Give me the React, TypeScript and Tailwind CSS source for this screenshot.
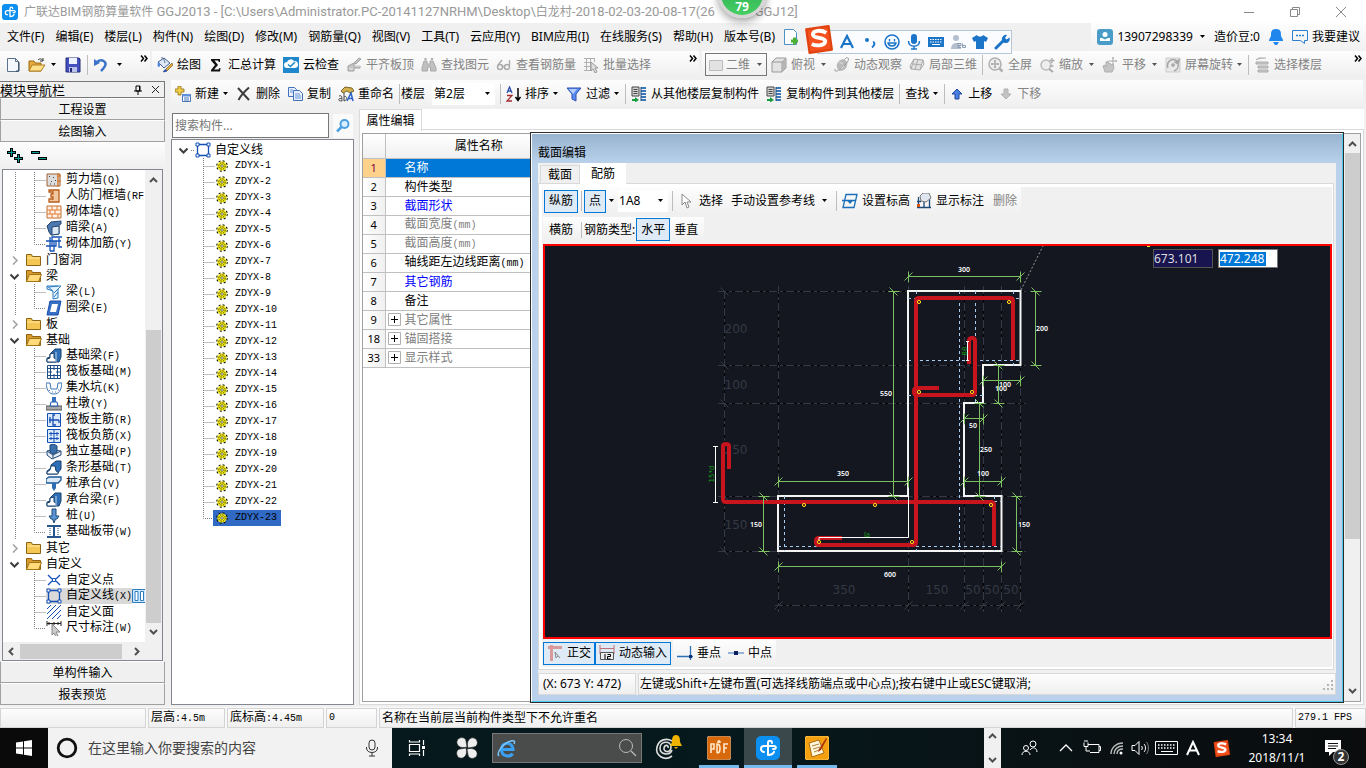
import React from 'react';

type Kids = { children?: React.ReactNode };

const Svg = ({ children, w = 16, h = 16, box }: Kids & { w?: number; h?: number; box?: string }) => (
  <svg width={w} height={h} viewBox={box ?? `0 0 ${w} ${h}`} fill="none" className="shrink-0" aria-hidden="true">
    {children}
  </svg>
);

const Caret = ({ color = '#000' }: { color?: string }) => (
  <Svg w={7} h={4}><path d="M1 0h5L3.5 3z" fill={color} /></Svg>
);

// Latin runs are drawn half as wide as the Chinese ones
const Mono = ({ text }: { text: string }) => (
  <>
    {text.split(/([\x20-\x7e]+)/).filter(Boolean).map((part, i) =>
      /^[\x20-\x7e]/.test(part)
        ? <span key={i} className="font-['Liberation_Mono','Noto_Sans_CJK_SC',monospace] text-[10px] whitespace-pre">{part}</span>
        : part
    )}
  </>
);

const Sep = () => <span className="-mx-0.5 h-5 w-px shrink-0 bg-[#bdbdbd]" />;

const More = () => (
  <Svg w={8} h={7}><path d="M1 .5l2.500 3L1 6.500M4.500 .5l2.500 3-2.500 3" stroke="#000" strokeWidth="1.500" /></Svg>
);

/* ---------- toolbar icons ---------- */

const NewFile = () => <Svg w={14}><path d="M1.500 1.500h8l3 3v10h-11z" fill="#f4f8fd" stroke="#5d7189" /><path d="M9.500 1.500v3h3" stroke="#5d7189" /><path d="M10 14h3V5" stroke="#2c4664" /></Svg>;

const OpenFile = () => (
  <Svg w={18}>
    <path d="M1 14V4h5l1 2h6v8z" fill="#e6a93a" stroke="#9b6a14" />
    <path d="M1 14l3-6h13l-4 6z" fill="#ffe08a" stroke="#b07d20" />
    <path d="M10 3c2-2 4-1 5 1M15 1v3h-3" stroke="#333" />
  </Svg>
);

const Save = () => (
  <Svg>
    <path d="M1 1h13l1 1v13H1z" fill="#4550c0" stroke="#222a78" />
    <path d="M4 1h8v6H4z" fill="#eef1ff" /><path d="M4 10h8v5H4z" fill="#b9c1e8" /><path d="M5 11h2v4H5z" fill="#222a78" />
  </Svg>
);

const Undo = () => <Svg w={14}><path d="M3 5c5-4 10 0 8 4-1 2-2 3-4 5" stroke="#3b74c8" strokeWidth="2.500" /><path d="M0 2v7l6-3z" fill="#3b74c8" /></Svg>;

const Bucket = () => (
  <Svg>
    <path d="M1 5l6-4 6 5-6 5z" fill="#dfe9f5" stroke="#44608c" /><path d="M4 1c1-1 3 0 4 5" stroke="#44608c" />
    <path d="M1 5c-1 4 0 5 1 5s1-2 1-4z" fill="#4c86d8" /><path d="M15 6l-7 7-2 2 4-1 6-6z" fill="#e5b13a" stroke="#5b4310" strokeWidth=".6" />
    <path d="M6 15c2-4 4-3 4-1-1 1-2 1-4 1z" fill="#2c56b8" />
  </Svg>
);

const Sigma = () => <Svg><path d="M3 2h9v3h-1l-1-1.500H6.500L10 8l-4 4.500h4.500L11.500 11h1l-.5 3.500H3V13l4-5-4-4.500z" fill="#111" /></Svg>;

const CloudCheck = () => (
  <Svg>
    <path d="M0 0h16v16H0z" fill="#1f87cc" /><path d="M4 11a3 3 0 0 1 0-6 4 4 0 0 1 7-1 3.500 3.500 0 0 1 1 7z" fill="#fff" />
    <path d="M5 7.500l2.500 2L12 5" stroke="#1f87cc" strokeWidth="1.500" />
  </Svg>
);

const SlabTop = () => <Svg><path d="M2 9l6-3v3h6v2H8v3H2zM8 6l5-5 2 1-5 5z" fill="#c4c4c4" stroke="#a2a2a2" /><path d="M3 12h4M9 9h5" stroke="#eee" /></Svg>;
const Binocular = () => <Svg><path d="M3 4h3v3h3V4h3l3 7v3H9.500v-4h-3v4H1v-3z" fill="#c0c0c0" stroke="#a8a8a8" /><path d="M3.500 2h2M10 2h2" stroke="#aaa" strokeWidth="2" /></Svg>;
const Glasses = () => <Svg><circle cx="4" cy="10" r="2.500" stroke="#aaa" strokeWidth="1.500" /><circle cx="11" cy="10" r="2.500" stroke="#aaa" strokeWidth="1.500" /><path d="M2 8l4-5M13.500 9V3M6.500 9.500h2" stroke="#aaa" strokeWidth="1.300" /></Svg>;
const BatchSelect = () => <Svg><path d="M1 1.500h11M1 5.500h8M1 9.500h7M1 13.500h7M3.500 1v13M7.500 1v13M11.500 1v4" stroke="#b0b0b0" /><path d="M8 5l7 6h-3l2 4-2 1-2-4-2 2z" fill="#ddd" stroke="#999" /></Svg>;
const Cube = () => <Svg><path d="M1 5l4-4h10v10l-4 4H1z" fill="#e3e3e3" stroke="#999" /><path d="M1 5h10v10M11 5l4-4" stroke="#999" /><path d="M11 5l4-4v10l-4 4z" fill="#b5b5b5" /></Svg>;
const Planet = () => <Svg><ellipse cx="8" cy="8" rx="5" ry="6" fill="#b9b9b9" transform="rotate(30 8 8)" /><path d="M1 12c-1 4 4 2 8-2s7-8 5-9-4 2-4 2" stroke="#999" /><path d="M5 5l4 2M7 12l3-3" stroke="#ddd" /></Svg>;
const Cube3d = () => <Svg><path d="M5 2l9 1-3 10-9-1z" fill="#e2e2e2" stroke="#aaa" /><path d="M9 2.500L6 12.500M4 7l9 1M2 12L1 9l4-7M14 3l1 4-4 6" stroke="#aaa" /></Svg>;
const FullView = () => <Svg><circle cx="7" cy="7" r="6" fill="#eee" stroke="#b0b0b0" strokeWidth="1.500" /><path d="M11.500 11.500l3 3" stroke="#b0b0b0" strokeWidth="2.500" /><path d="M7 3v8M3 7h8M6 4h2M6 10h2M4 6v2M10 6v2" stroke="#999" /></Svg>;
const ZoomIcon = () => <Svg><circle cx="7" cy="8" r="5" fill="#eee" stroke="#bbb" strokeWidth="1.500" /><path d="M10 12l4 3" stroke="#aaa" strokeWidth="2" /><path d="M13 1v5M10.500 3.500h5M10.500 9h4" stroke="#aaa" strokeWidth="1.300" /></Svg>;
const Pan = () => <Svg><path d="M3 15l-2-6 2-1 1 2V5l2-1 1 3 1-1 1 2 2-1 1 4-2 4z" fill="#c4c4c4" stroke="#b0b0b0" /><path d="M11 0v8M7 4h8M10 1h2M14 3v2" stroke="#aaa" /></Svg>;
const Rotate = () => <Svg><path d="M1 1h14v14H1z" fill="#e8e8e8" stroke="#ccc" /><path d="M3 11a6 6 0 0 1 3-8c3-1 6 0 7 3M13 6c1 4-1 7-4 8M6 8h4M8 6v4M14 3l-1 4-3-2z" stroke="#a6a6a6" strokeWidth="1.500" /></Svg>;
const Floors = () => <Svg><path d="M2 5h12v2H2zM4 9h10v2H4zM4 13h10v2H4zM2 3l3-2h7" fill="#ccc" stroke="#aaa" /></Svg>;
const FlatView = () => <Svg><path d="M1.500 3.500h13v10h-13z" fill="#e2e2e2" stroke="#bdbdbd" /></Svg>;

const AddNew = () => (
  <Svg>
    <path d="M3 0h3v3h3v3H6v3H3V6H0V3h3z" fill="#f6cf4a" stroke="#8d7012" strokeWidth=".8" />
    <path d="M7.500 8.500h8v7h-8z" fill="#fff" stroke="#4773b8" /><path d="M7 8h9v2.500H7z" fill="#5e8fd8" /><path d="M9 12h5M9 14h5" stroke="#4773b8" />
  </Svg>
);
const Cross = () => <Svg><path d="M2 2l11 12M13 1.500C9 5 5 9 2.500 14" stroke="#3c3c3c" strokeWidth="2" /></Svg>;
const Copy = () => <Svg><path d="M1.500 1.500h6l2 2v7h-8z" fill="#e7f0fc" stroke="#4370ba" /><path d="M6.500 4.500h6l3 3v7h-9z" fill="#e7f0fc" stroke="#4370ba" /><path d="M3 4h3M3 6h3M8 8h5M8 10h6M8 12h6" stroke="#6b97d8" /></Svg>;
const Rename = () => (
  <Svg>
    <path d="M3 5l4-4 7 1 2 3-4 2-3-2-4 2z" fill="#d4b04c" stroke="#5e4b12" strokeWidth=".8" />
    <path d="M1 10c3-1 3 1 3 5-3 0-4-1-3-2s3-.5 3-.5M6 7v8M6 11c3-2 4 3 0 4" stroke="#444" /><path d="M9 15l4-8 2 8M10 12.500h5" stroke="#2c62c8" strokeWidth="1.500" />
  </Svg>
);
const SortAz = () => <Svg w={15}><path d="M1 7l2.500-6L6 7M2 5h3" stroke="#2d4fa8" strokeWidth="1.300" /><path d="M1 9.500h5L1 15h5" stroke="#a32c30" strokeWidth="1.300" /><path d="M12 2v12M9.500 11l2.500 3.500 2.500-3.500" stroke="#000" strokeWidth="1.500" /></Svg>;
const Funnel = () => <Svg><path d="M1 2h14l-5 6v7l-4-2V8z" fill="#5b8df0" stroke="#2a50ae" /><path d="M3 3h8L7 8z" fill="#b6cdfb" /></Svg>;
const FloorCopy = () => (
  <Svg>
    <path d="M1 1h7v9H1z" fill="#d5d5d5" stroke="#444" /><path d="M2.500 3.500h4M2.500 5.500h4M2.500 7.500h4" stroke="#444" />
    <path d="M10 2h5M10 5h5M10 8h5M10 11h5M10 14h5" stroke="#3b78b8" strokeWidth="2" /><path d="M10 1v14" stroke="#24507c" />
    <path d="M1 13h3v-2l4 3-4 2.500V15H1z" fill="#189c40" />
  </Svg>
);
const ArrowUp = () => <Svg w={14} h={12}><path d="M7 1l5 5H9v5H5V6H2z" fill="#4a7ee0" stroke="#1f489e" /></Svg>;
const ArrowDown = () => <Svg w={14} h={12}><path d="M7 11l5-5H9V1H5v5H2z" fill="#c4c4c4" stroke="#b0b0b0" /></Svg>;
const Search = () => <Svg><circle cx="9.500" cy="6" r="4" fill="#d9efff" stroke="#4a9fe0" strokeWidth="2" /><path d="M6.500 9L2 13.500" stroke="#4a9fe0" strokeWidth="2.500" /></Svg>;

const AppLogo = ({ size = 16 }: { size?: number }) => (
  <Svg w={size} h={size} box="0 0 24 24">
    <rect width="24" height="24" rx="5" fill="#0b8ff0" />
    <path d="M16 7c0-3-4-3-4 0v12M5 13c0-2 1-3 3-3h10c3 0 2 4-1 3M5 13c0 2 2 3 3 3M12 19c3 0 5-1 6-3" stroke="#fff" strokeWidth="2" strokeLinecap="round" />
  </Svg>
);

const SogouLogo = ({ size }: { size: number }) => (
  <Svg w={size} h={size} box="0 0 26 26">
    <path d="M2 4l20-3 3 21-20 3z" fill="#f4511e" stroke="#e0430f" strokeLinejoin="round" strokeWidth="2" />
    <path d="M20 7c-5-3-12-2-12 1.500 0 4 11 2 11 6 0 3.500-7 5-12 2.500" stroke="#fff" strokeWidth="3.500" />
  </Svg>
);

/* ---------- header ---------- */

const menus = ['文件(F)', '编辑(E)', '楼层(L)', '构件(N)', '绘图(D)', '修改(M)', '钢筋量(Q)', '视图(V)', '工具(T)', '云应用(Y)', 'BIM应用(I)', '在线服务(S)', '帮助(H)', '版本号(B)'];

const TitleBar = () => (
  <header className="relative flex h-[23px] shrink-0 items-center bg-white pl-0.5">
    <AppLogo />
    <h1 className="ml-1.5 font-['Roboto','Noto_Sans_CJK_SC',sans-serif] text-[13px] whitespace-pre text-[#999]">
      <span className="text-[12px]">广联达BIM钢筋算量软件</span> GGJ2013 - [C:\Users\Administrator.PC-20141127NRHM\Desktop\<span className="text-[12px]">白龙村</span>-2018-02-03-20-08-17(26<span className="ml-10">GGJ12]</span>
    </h1>
    <div className="absolute -top-[30px] left-[718px] z-20 flex size-12 items-end justify-center rounded-full border-3 border-[#d5d5d5] bg-linear-to-b from-[#28a050] to-[#45cf62] text-[12px] font-bold text-white shadow-[0_3px_8px_#0006]">79</div>
    <div className="ml-auto flex items-center gap-[34px] pr-[19px] text-[#888]">
      <button aria-label="最小化"><Svg w={12} h={12}><path d="M1 6.500h10" stroke="#888" /></Svg></button>
      <button aria-label="还原"><Svg w={12} h={12}><path d="M1.500 3.500h7v7h-7zM3.500 3.500v-2h7v7h-2" stroke="#888" /></Svg></button>
      <button aria-label="关闭"><Svg w={12} h={12}><path d="M1 1l10 10M11 1L1 11" stroke="#888" /></Svg></button>
    </div>
  </header>
);

const SogouBar = () => (
  <div className="absolute top-[7px] left-[817px] z-10 flex h-6 w-[195px] items-center gap-[6px] border border-[#b4c6d8] bg-[#fafcff] pl-5">
    <div className="absolute -top-1.5 -left-3.5"><SogouLogo size={29} /></div>
    <Svg w={18}><path d="M3 14L9 2l6 12M5.500 10h7" stroke="#1a74c8" strokeWidth="2.200" /></Svg>
    <Svg><circle cx="5" cy="6" r="2" fill="#1a74c8" /><path d="M11 8.500c2-1 2 3-1 5" stroke="#1a74c8" strokeWidth="2" /></Svg>
    <Svg><circle cx="8" cy="8" r="7" stroke="#1a74c8" strokeWidth="1.600" /><path d="M5.500 5v2.500M10.500 5v2.500M4 9c1 4 7 4 8 0z" stroke="#1a74c8" strokeWidth="1.400" /></Svg>
    <Svg><rect x="5" y="0" width="6" height="10" rx="3" fill="#1a74c8" /><path d="M2.500 7c0 7 11 7 11 0M8 12v3M5 15h6" stroke="#1a74c8" strokeWidth="1.500" /></Svg>
    <Svg><path d="M0 3h16v10H0z" fill="#1a74c8" /><path d="M2 5.500h12M2 8h12" stroke="#fff" strokeDasharray="1.500 1" /><path d="M4 10.500h8" stroke="#fff" /></Svg>
    <Svg><circle cx="6" cy="4" r="3" fill="#b3bfd0" /><path d="M1 15c0-8 10-8 10 0z" fill="#b3bfd0" /><path d="M7 9.500h4v2H8v2h3M12.500 9.500v4h3v-2h-3" stroke="#8b9ab0" /></Svg>
    <Svg><path d="M5 1c1 2 5 2 6 0l5 3-2 4-2-1v8H4V7L2 8 0 4z" fill="#1a74c8" /></Svg>
    <Svg><path d="M2 14l7-7" stroke="#1a74c8" strokeWidth="3" strokeLinecap="round" /><path d="M13 1l-2 3 1.500 1.500 3-2c1 3-1 6-4 5.500C8 9 7 5 8.500 3S11 .5 13 1z" fill="#1a74c8" /></Svg>
  </div>
);

const MenuBar = () => (
  <nav className="relative flex h-7 shrink-0 items-center bg-[#f0f0f0] pl-[7px]">
    <div className="flex gap-[11px]">
      {menus.map(m => <button key={m}>{m}</button>)}
    </div>
    <div className="ml-2"><Svg><path d="M1.500 .5h9l3 3v12h-12z" fill="#fff" stroke="#4b92c8" /><path d="M8 12h7M11.500 8.500v7" stroke="#4cb030" strokeWidth="3" /></Svg></div>
    <SogouBar />
    <div className="ml-auto flex h-full items-center bg-linear-to-b from-[#fdfdfd] to-[#f0f0f0] pr-1.5 pl-1.5">
      <Svg><rect width="16" height="16" rx="3" fill="#4a9cc8" /><circle cx="8" cy="5.500" r="2.500" fill="#fff" /><path d="M3 12V9h2l3 1.500L11 9h2v3z" fill="#fff" /></Svg>
      <button className="ml-1 flex items-center gap-1.5">13907298339 <Caret /></button>
      <span className="ml-2">造价豆:0</span>
      <span className="ml-2"><Svg><path d="M8 0c5 0 5 3 5 7l2 4v1H1v-1l2-4c0-4 0-7 5-7z" fill="#1f86ee" /><path d="M5 13h6l-2 3H7z" fill="#1f86ee" /></Svg></span>
      <button className="ml-2 flex items-center gap-1"><Svg><path d="M.5 1.500h15v10h-3v3l-4-3h-8z" stroke="#2a7fd0" /><path d="M4 6.500h8" stroke="#2a7fd0" strokeWidth="1.500" strokeDasharray="2 1" /></Svg>我要建议</button>
    </div>
  </nav>
);

interface ToolProps {
  icon?: React.ReactNode;
  label: string;
  caret?: boolean;
  off?: boolean;
  tight?: boolean;
}

const Tool = ({ icon, label, caret, off, tight }: ToolProps) => (
  <button className={`flex shrink-0 items-center gap-1 whitespace-nowrap ${off ? 'text-[#838383]' : 'text-black'}`}>
    {icon}
    {label}
    {caret && <span className={tight ? '-ml-px' : 'ml-px'}><Caret color={off ? '#555' : '#000'} /></span>}
  </button>
);

const bar = 'flex items-center bg-linear-to-b from-[#fdfdfd] to-[#efefef]';

const MainToolbar = () => (
  <div className="flex h-[29px] shrink-0 bg-[#f0f0f0] pb-0.5">
    <div className={`${bar} w-[150px] gap-2 pl-1.5`}>
      <button aria-label="新建"><NewFile /></button>
      <button aria-label="打开" className="flex items-center gap-1"><OpenFile /><Caret /></button>
      <button aria-label="保存"><Save /></button>
      <Sep />
      <button aria-label="撤销" className="flex items-center gap-2"><Undo /><Caret /></button>
      <span className="mb-3 ml-auto pr-0.5"><More /></span>
    </div>
    <div className={`${bar} ml-0.5 w-[547px] gap-[7px] pl-[5px]`}>
      <Tool icon={<Bucket />} label="绘图" />
      <Tool icon={<Sigma />} label="汇总计算" />
      <Tool icon={<CloudCheck />} label="云检查" />
      <Tool icon={<SlabTop />} label="平齐板顶" off />
      <Tool icon={<Binocular />} label="查找图元" off />
      <Tool icon={<Glasses />} label="查看钢筋量" off />
      <Tool icon={<BatchSelect />} label="批量选择" off />
      <span className="mb-3 ml-auto pr-0.5"><More /></span>
    </div>
    <div className={`${bar} ml-[3px] grow gap-[7px] pl-[3px]`}>
      <label className="-mr-[3px] flex h-[23px] w-[62px] items-center border border-[#777] pr-[3px] pl-0.5 text-[#838383]">
        <FlatView />
        <select aria-label="视图模式" className="ml-0.5 w-7 appearance-none outline-none"><option>二维</option></select>
        <span className="ml-auto"><Caret color="#555" /></span>
      </label>
      <Tool icon={<Cube />} label="俯视" caret off />
      <Tool icon={<Planet />} label="动态观察" off />
      <Tool icon={<Cube3d />} label="局部三维" off />
      <Sep />
      <Tool icon={<FullView />} label="全屏" off />
      <Tool icon={<ZoomIcon />} label="缩放" caret off />
      <Tool icon={<Pan />} label="平移" caret off />
      <Tool icon={<Rotate />} label="屏幕旋转" caret tight off />
      <Sep />
      <Tool icon={<Floors />} label="选择楼层" off />
      <span className="mb-3 ml-auto pr-1"><More /></span>
    </div>
  </div>
);

const ComponentToolbar = () => (
  <div className={`${bar} mr-[3px] h-7 shrink-0 gap-[7px] pl-1`}>
    <Tool icon={<AddNew />} label="新建" caret tight />
    <Tool icon={<Cross />} label="删除" />
    <Tool icon={<Copy />} label="复制" />
    <Tool icon={<Rename />} label="重命名" />
    <Sep />
    <label htmlFor="floor" className="-ml-1">楼层</label>
    <span className="flex h-[22px] w-[63px] items-center bg-white pr-1 pl-0.5">
      <select id="floor" className="grow appearance-none outline-none"><option>第2层</option></select>
      <Caret />
    </span>
    <Sep />
    <Tool icon={<SortAz />} label="排序" caret tight />
    <Tool icon={<Funnel />} label="过滤" caret tight />
    <Sep />
    <Tool icon={<FloorCopy />} label="从其他楼层复制构件" />
    <Tool icon={<FloorCopy />} label="复制构件到其他楼层" />
    <Sep />
    <Tool label="查找" caret tight />
    <Sep />
    <Tool icon={<ArrowUp />} label="上移" />
    <Tool icon={<ArrowDown />} label="下移" off />
  </div>
);

/* ---------- navigation tree ---------- */

const blue = '#1450b4';

const treeIcons: Record<string, React.ReactNode> = {
  wall: <Svg><path d="M1 2h13v12H1z" fill="#ddd" stroke="#a06030" /><path d="M3 4l1 1M7 5l1 1M5 9l1 1M9 8l1 1M4 12h1M8 12h1" stroke="#444" /><path d="M12 1v14M11 4h4M11 9h4" stroke="#d88038" strokeWidth="1.500" /></Svg>,
  door: <Svg><path d="M3 2h10v12H3v-3h4V9H5V6h2V4H3z" fill="#f0c8a0" stroke="#b85c1c" strokeWidth="1.300" /></Svg>,
  brick: <Svg><path d="M1 2h14v12H1z" fill="#fff1e4" stroke="#c07030" /><path d="M1 6h14M1 10h14M6 2v4M11 2v4M4 6v4M9 6v4M6 10v4M12 10v4" stroke="#e07b34" /></Svg>,
  hidden: <Svg><path d="M1 6l4-4 10-1v3l-2 1v9l-8 1-2-3z" fill="#4b78b0" stroke="#28466e" /><path d="M6 7l7-1v8l-7 1z" fill="#dbe8f6" stroke="#28466e" /></Svg>,
  rebar: <Svg><path d="M0 10h6V1h10M0 5h15M4 1v14M8 5v10h-4M0 10h10V5M13 2v9h3" stroke={blue} strokeWidth="1.300" /></Svg>,
  beam: <Svg><path d="M1 2h14l-3 3v9l-5 1V7L1 5z" fill="#e4f2ff" stroke="#2c7cc0" /><path d="M1 2l6 5M8 13l4-5M8 9l5-5M3 3l9-1" stroke="#2c7cc0" /></Svg>,
  ring: <Svg><path d="M4 1h11l-3 14H1z" fill="#3a70c4" stroke={blue} /><path d="M6 4h6l-2 8H4z" fill="#fff" /></Svg>,
  fbeam: <Svg><path d="M1 14v-4l3-1V6l5-5h6v8l-2 5z" fill="#2d6eb4" stroke="#17406e" /><path d="M1 14v-3l3-1V6l4-1v5l2 1v3z" fill="#fff" stroke="#17406e" /><path d="M10 14V4" stroke="#bcd6f0" /></Svg>,
  raft: <Svg><path d="M1.500 1.500h13v13h-13zM4.500 1v14M8 1v14M11.500 1v14M1 4.500h14M1 8h14M1 11.500h14" stroke="#1d4f88" /><path d="M6 6h4v4H6z" fill="#fff" /></Svg>,
  pit: <Svg><path d="M0 3h4l1 6h6l1-6h4M0 3c1 8 3 11 8 11s7-3 8-11" stroke="#3e74b4" /><path d="M3 10l1 1M6 12h1M9 12h1M12 10h1" stroke="#3e74b4" /></Svg>,
  pier: <Svg><path d="M0 10h16v4H0z" fill="#a8a8a8" stroke="#555" /><path d="M4 10l1-4h6l1 4z" fill="#fff" stroke={blue} /><path d="M6 1h4v5H6z" fill="#3870c0" /></Svg>,
  main: <Svg><path d="M1.500 1.500h13v13h-13z" fill="#dce9fb" stroke={blue} /><path d="M9 3H7v10h3M3 8h10M4 5v6M13 8v3" stroke={blue} strokeWidth="1.300" /></Svg>,
  neg: <Svg><path d="M1.500 1.500h13v13h-13zM8 1v14" fill="#dce9fb" stroke={blue} /><path d="M3 5.500h10M3 10.500h10M5 4v4M11 4v4M5 9v3M11 9v3" stroke={blue} /></Svg>,
  single: <Svg><path d="M1 7l5-1 9 1v4l-9 4-5-4z" fill="#e8eef6" stroke="#1c4878" /><path d="M4 8V1l4-1 3 2v6l-4 2z" fill="#3c70ac" stroke="#1c4878" /><path d="M1 7l6 4 8-4M7 11v3" stroke="#1c4878" /></Svg>,
  strip: <Svg><path d="M1 14v-3l4-3V5l5-4h5v8l-4 5z" fill="#2d6eb4" stroke="#17406e" /><path d="M1 14v-2l3-2 1-4h4l1 5 2 1v2z" fill="#fff" stroke="#17406e" /></Svg>,
  cap: <Svg><path d="M0 3l3-2h12v3l-3 3H0z" fill="#dbe8f6" stroke="#1c5898" strokeWidth="1.300" /><path d="M6 7h4v5l-2 3-2-3z" fill="#2c6cb0" /></Svg>,
  pile: <Svg><path d="M6 1h4v7h3l-2 3H9.500L8 15l-1.500-4H5L3 8h3z" fill="#5b94d0" stroke="#1c4878" /></Svg>,
  band: <Svg><path d="M1 2h14M1 13h14M8 2v11" stroke="#27548c" strokeWidth="2" /><path d="M4 4v8M12 4v8" stroke="#27548c" strokeDasharray="1 1" /></Svg>,
  point: <Svg><path d="M2 3l4 4M10 9l4 4M14 3l-4 4M6 9l-4 4" stroke={blue} strokeWidth="1.300" /><path d="M6.500 6.500h3v3h-3z" stroke={blue} /></Svg>,
  line: <Svg><path d="M2.500 2.500h11v11h-11z" stroke={blue} strokeWidth="1.300" /><path d="M1 1h3v3H1zM12 1h3v3h-3zM1 12h3v3H1zM12 12h3v3h-3z" fill="#fff" stroke={blue} /></Svg>,
  face: <Svg><path d="M1 5l4-4M1 10l9-9M1 15L15 1M6 15l9-9M11 15l4-4" stroke={blue} /></Svg>,
  dim: <Svg><path d="M1 1v5M15 1v5M1 3.500h14M3 2v3M8 2v3M12 2v3" stroke="#222" /><path d="M6 4l8 8h-4l2 4-2 1-2-4-2 2z" fill="#ccc" stroke="#888" /></Svg>,
};

const Folder = ({ open }: { open?: boolean }) => (
  <Svg>
    <path d="M.5 13.500v-11h5l1 2h8v9z" fill={open ? '#d99a2c' : '#f4c653'} stroke="#8c6414" />
    {open ? <path d="M.5 13.500l3-7h12l-3 7z" fill="#ffdc79" stroke="#a37417" /> : <path d="M1 6h13" stroke="#ffe9a8" />}
  </Svg>
);

// rows without an icon are folders
type Row = { label: string; icon?: string; open?: boolean; last?: boolean; inTop?: boolean };
const rows: Row[] = [
  { label: '剪力墙(Q)', icon: 'wall' },
  { label: '人防门框墙(RF', icon: 'door' },
  { label: '砌体墙(Q)', icon: 'brick' },
  { label: '暗梁(A)', icon: 'hidden' },
  { label: '砌体加筋(Y)', icon: 'rebar', last: true },
  { label: '门窗洞' },
  { label: '梁', open: true },
  { label: '梁(L)', icon: 'beam' },
  { label: '圈梁(E)', icon: 'ring', last: true },
  { label: '板' },
  { label: '基础', open: true },
  { label: '基础梁(F)', icon: 'fbeam' },
  { label: '筏板基础(M)', icon: 'raft' },
  { label: '集水坑(K)', icon: 'pit' },
  { label: '柱墩(Y)', icon: 'pier' },
  { label: '筏板主筋(R)', icon: 'main' },
  { label: '筏板负筋(X)', icon: 'neg' },
  { label: '独立基础(P)', icon: 'single' },
  { label: '条形基础(T)', icon: 'strip' },
  { label: '桩承台(V)', icon: 'cap' },
  { label: '承台梁(F)', icon: 'fbeam' },
  { label: '桩(U)', icon: 'pile' },
  { label: '基础板带(W)', icon: 'band', last: true },
  { label: '其它' },
  { label: '自定义', open: true },
  { label: '自定义点', icon: 'point', inTop: true },
  { label: '自定义线(X)', icon: 'line', inTop: true },
  { label: '自定义面', icon: 'face', inTop: true },
  { label: '尺寸标注(W)', icon: 'dim', last: true, inTop: true },
];

const Chevron = ({ open }: { open?: boolean }) => (
  <Svg w={9} h={9}><path d={open ? 'M.5 2.500l4 4 4-4' : 'M3 .5l4 4-4 4'} stroke={open ? '#404040' : '#a0a0a0'} strokeWidth={open ? 2 : 1.5} /></Svg>
);

const Guide = ({ last }: { last?: boolean }) => (
  <Svg w={12}><path d={last ? 'M.5 0v8.500H12' : 'M.5 0v16M.5 8.500H12'} stroke="#808080" strokeDasharray="1 1" /></Svg>
);

const Arrow = ({ dir }: { dir: 'up' | 'down' | 'left' | 'right' }) => {
  const paths = { up: 'M1 6l3.500-3.500L8 6', down: 'M1 3l3.500 3.500L8 3', left: 'M6 1L2.500 4.500 6 8', right: 'M3 1l3.500 3.500L3 8' };
  return <Svg w={9} h={9}><path d={paths[dir]} stroke="#505050" strokeWidth="2" /></Svg>;
};

const navButton = 'h-[22px] shrink-0 border border-[#a0a0a0] border-t-white bg-[#f0f0f0] pt-px text-center';

const NavTree = () => (
  <div className="mr-0.5 ml-0.5 flex min-h-0 grow flex-col border border-[#828790] bg-[#f0f0f0] pr-px">
    <div className="flex min-h-0 grow">
      <ul className="min-w-0 grow overflow-hidden bg-white pt-0.5">
        {rows.map(r => (
          <li key={r.label + (r.icon ?? '')} className="flex h-4 items-center whitespace-nowrap">
            {r.icon ? (
              <>
                <span className="w-[31px] shrink-0 pl-3">{!r.inTop && <Svg w={1}><path d="M.5 0v16" stroke="#808080" strokeDasharray="1 1" /></Svg>}</span>
                <Guide last={r.last} />
                <span className={`flex h-4 shrink-0 items-center gap-1 ${r.icon === 'line' ? 'bg-[#d9d9d9]' : ''}`}>{treeIcons[r.icon]}<span><Mono text={r.label} /></span></span>
                {r.icon === 'line' && (
                  <Svg w={14} h={14}><path d="M.5 .5h13v13H.5z" fill="#cfe8ff" stroke="#2c7cc0" /><path d="M3 2.500h3v9H3zM8.500 2.500h3v9h-3z" fill="#fff" stroke="#2c7cc0" /></Svg>
                )}
              </>
            ) : (
              <>
                <span className="flex w-[23px] shrink-0 items-center pl-[7px]"><Chevron open={r.open} /></span>
                <Folder open={r.open} />
                <span className="ml-1"><Mono text={r.label} /></span>
              </>
            )}
          </li>
        ))}
      </ul>
      <div className="flex w-4 shrink-0 flex-col items-center py-1.5">
        <Arrow dir="up" />
        <span className="mt-[145px] mb-1 w-[15px] grow bg-[#cdcdcd]" />
        <Arrow dir="down" />
      </div>
    </div>
    <div className="flex h-[18px] items-center gap-1 pl-1">
      <Arrow dir="left" />
      <span className="h-[15px] w-[102px] bg-[#cdcdcd]" />
      <span className="ml-1.5"><Arrow dir="right" /></span>
    </div>
  </div>
);

const NavPanel = () => (
  <aside className="flex w-[165px] shrink-0 flex-col pt-px pb-0.5">
    <div className="flex h-[17px] items-center border border-[#777] border-l-0 pr-1">
      <h2 className="grow text-[13px]">模块导航栏</h2>
      <Svg w={10} h={10}><path d="M3 1h4v5H3zM1 6h8M5 6v4" stroke="#000" /><path d="M6.500 1v5" stroke="#000" /></Svg>
      <button aria-label="关闭导航栏" className="ml-2"><Svg w={9} h={9}><path d="M1 1l7 7M8 1L1 8" stroke="#222" /></Svg></button>
    </div>
    <button className={navButton}>工程设置</button>
    <button className={navButton}>绘图输入</button>
    <div className={`${bar} h-[27px] shrink-0 gap-2 pl-[7px]`}>
      <Svg><path d="M4.500 0v9M0 4.500h9M11.500 6v9M7 10.500h9" stroke="#000" strokeWidth="3" /><path d="M4.500 1v7M1 4.500h7M11.500 7v7M8 10.500h7" stroke="#0c9a94" /></Svg>
      <Svg><path d="M0 4.500h9M7 10.500h9" stroke="#000" strokeWidth="3" /><path d="M1 4.500h7M8 10.500h7" stroke="#0c9a94" /></Svg>
    </div>
    <NavTree />
    <button className={navButton}>单构件输入</button>
    <button className={navButton}>报表预览</button>
  </aside>
);

/* ---------- component list ---------- */

const Gear = () => (
  <Svg w={12} h={12}>
    <circle cx="6" cy="6" r="5.200" stroke="#1a1a00" strokeWidth="1.200" strokeDasharray="2.100 1.980" />
    <circle cx="6" cy="6" r="4.600" fill="#f5ee10" />
    <circle cx="6" cy="6" r="3.200" stroke="#1a1a00" strokeWidth=".8" strokeDasharray="1.500 1" />
    <circle cx="6" cy="6" r="1.300" fill="#fff" stroke="#1a1a00" strokeWidth=".6" />
  </Svg>
);

const components = Array.from({ length: 23 }, (_, i) => `ZDYX-${i + 1}`);

const ComponentList = () => (
  <section className="flex w-[183px] shrink-0 flex-col pb-0.5">
    <div className="flex h-[31px] shrink-0 items-center gap-1 pt-1">
      <input aria-label="搜索构件" placeholder="搜索构件..." className="ml-px h-[25px] w-[157px] border border-[#777] bg-white px-0.5 outline-none placeholder:text-[#777]" />
      <button aria-label="搜索" className="flex h-6 w-5 items-center justify-center bg-[#fafafa]"><Search /></button>
    </div>
    <div className="grow border border-[#828790] bg-white pt-0.5">
      <div className="flex h-4 items-center pl-[7px]">
        <Chevron open />
        <Svg w={7}><path d="M3 8.500h4" stroke="#808080" strokeDasharray="1 1" /></Svg>
        {treeIcons.line}
        <span className="ml-1">自定义线</span>
      </div>
      <ul>
        {components.map((name, i) => {
          const picked = i === components.length - 1;
          return (
            <li key={name} className="flex h-4 items-center pl-[31px]">
              <Guide last={picked} />
              <button className={`-ml-0.5 flex h-4 items-center gap-[7px] pr-1 pl-[3px] ${picked ? 'bg-[#316ac5]' : ''}`}><Gear /><Mono text={name} /></button>
            </li>
          );
        })}
      </ul>
    </div>
  </section>
);

/* ---------- property table ---------- */

const props = [
  { no: 1, name: '名称' },
  { no: 2, name: '构件类型' },
  { no: 3, name: '截面形状', color: 'text-[#0000ff]' },
  { no: 4, name: '截面宽度(mm)', color: 'text-[#808080]' },
  { no: 5, name: '截面高度(mm)', color: 'text-[#808080]' },
  { no: 6, name: '轴线距左边线距离(mm)' },
  { no: 7, name: '其它钢筋', color: 'text-[#0000ff]' },
  { no: 8, name: '备注' },
  { no: 9, name: '其它属性', color: 'text-[#808080]', group: true },
  { no: 18, name: '锚固搭接', color: 'text-[#808080]', group: true },
  { no: 33, name: '显示样式', color: 'text-[#808080]', group: true },
];

const PropertyTable = () => (
  <table className="w-[210px] table-fixed border-collapse self-start">
    <thead>
      <tr className="h-6 bg-linear-to-b from-white to-[#f0f0f0]">
        <th className="w-[22px] border-r border-b border-[#c0c0c0]" aria-label="序号" />
        <th className="border-r border-b border-[#c0c0c0] p-0 font-normal">属性名称</th>
      </tr>
    </thead>
    <tbody>
      {props.map(p => (
        <tr key={p.no} className="h-[19px]">
          <td className={`border-r border-b border-[#c0c0c0] p-0 text-center text-[11px] leading-[18px] ${p.no === 1 ? 'bg-[#ffd28c] text-[#800040]' : 'bg-linear-to-r from-white to-[#f0f0f0]'}`}>{p.no}</td>
          <td className={`border-r border-b border-[#c0c0c0] p-0 leading-[18px] whitespace-nowrap ${p.no === 1 ? 'bg-[#0078d7] text-white' : p.color ?? ''}`}>
            <span className="flex h-[18px] items-center">
              <span className="w-[19px] pl-0.5">
                {p.group && <Svg w={13} h={13}><path d="M.5 .5h12v12H.5z" fill="#fff" stroke="#b0b0b0" /><path d="M3 6.500h7M6.500 3v7" stroke="#000" /></Svg>}
              </span>
              <span><Mono text={p.name} /></span>
            </span>
          </td>
        </tr>
      ))}
    </tbody>
  </table>
);

/* ---------- section drawing ---------- */

const tick = (x: number, y: number, flip: boolean) => (flip ? `M${x - 4} ${y - 4}l8 8` : `M${x - 4} ${y + 4}l8 -8`);

const dims = [
  { x1: 908.5, y1: 276.5, x2: 1020.5, y2: 276.5, t: '300', tx: 964, ty: 272 },
  { x1: 1035.5, y1: 291.5, x2: 1035.5, y2: 365.5, t: '200', tx: 1042, ty: 331 },
  { x1: 893.5, y1: 291.5, x2: 893.5, y2: 496.5, t: '550', tx: 886, ty: 396 },
  { x1: 778.5, y1: 481.5, x2: 908.5, y2: 481.5, t: '350', tx: 843, ty: 476 },
  { x1: 763.5, y1: 496.5, x2: 763.5, y2: 551.5, t: '150', tx: 756, ty: 527 },
  { x1: 1016.5, y1: 496.5, x2: 1016.5, y2: 551.5, t: '150', tx: 1024, ty: 527 },
  { x1: 778.5, y1: 566.5, x2: 1001.5, y2: 566.5, t: '600', tx: 890, ty: 577 },
  { x1: 983.5, y1: 380.5, x2: 1020.5, y2: 380.5, t: '100', tx: 1005, ty: 387 },
  { x1: 998.5, y1: 365.5, x2: 998.5, y2: 403.5, t: '100', tx: 1001, ty: 391 },
  { x1: 964.5, y1: 418.5, x2: 983.5, y2: 418.5, t: '50', tx: 973, ty: 428 },
  { x1: 979.5, y1: 403.5, x2: 979.5, y2: 496.5, t: '250', tx: 986, ty: 452 },
  { x1: 964.5, y1: 481.5, x2: 1001.5, y2: 481.5, t: '100', tx: 983, ty: 476 },
];

const axisX = [778.5, 908.5, 964.5, 983.5, 1001.5, 1020.5];
const axisY = [291.5, 365.5, 403.5, 496.5, 551.5];
const axisLabels: [string, number, number][] = [
  ['200', 736, 333], ['100', 736, 389], ['250', 736, 454], ['150', 736, 529],
  ['350', 844, 594], ['150', 937, 594], ['50', 973, 594], ['50', 992, 594], ['50', 1011, 594],
];
const bars = [[919, 302], [1009, 302], [919, 392], [972, 392], [804, 505], [875, 505], [991, 505], [819, 542], [912, 542]];

const SectionDrawing = () => (
  <svg width="784" height="391" viewBox="545 246 784 391" fill="none" className="block font-['DejaVu_Sans',sans-serif]" role="img" aria-label="截面配筋图">
    <g stroke="#000">
      {axisX.map(x => <path key={x} d={`M${x} 286V612`} />)}
      {axisY.map(y => <path key={y} d={`M718 ${y}H1026`} />)}
      <path d="M724.500 291V551M775 605.500H1024" />
    </g>
    <g stroke="#343945" strokeDasharray="8 3 3 3">
      {axisX.map(x => <path key={x} d={`M${x} 286V612`} />)}
      {axisY.map(y => <path key={y} d={`M718 ${y}H1026`} />)}
      <path d="M724.500 291V551M775 605.500H1024" />
    </g>
    <g stroke="#343945">
      {axisX.map(x => <path key={x} d={tick(x, 605.5, false)} />)}
      {axisY.map(y => <path key={y} d={tick(724.5, y, true)} />)}
    </g>
    <g fill="#343945" fontSize="12" textAnchor="middle">
      {axisLabels.map(([t, x, y]) => <text key={`${x}-${y}`} x={x} y={y}>{t}</text>)}
    </g>
    <path d="M1021 290L1043 246" stroke="#999" strokeDasharray="2 2" />
    <path d="M1147 246.500h3" stroke="#ffe020" />
    <path d="M908 291H1020.500V365H983V403H964V496H1001.500V551H778V496H908z" stroke="#f4f4f4" strokeWidth="2" />
    <g stroke="#a8ccf0" strokeDasharray="3 3">
      <path d="M959.500 291V551M975.500 291V403M1013.500 291V366M916.500 291V551M784.500 496V551M994.500 496V551" />
      <path d="M908 298.500H1020M908 360.500H1020M908 395.500H983M778 546.500H1001M964 501.500H1001" />
    </g>
    <g stroke="#c8141c" strokeWidth="4" strokeLinejoin="round">
      <path d="M1013 360V301q0-3-3-3H919q-3 0-3 3V542q0 3-3 3H819q-3 0-3-3v-1q0-3 3-3H842" />
      <path d="M729 469V446q0-2-3-2t-3 2V499q0 3 3 3H991q3 0 3 3V546" />
      <path d="M969 364V341q0-3 3-3t3 3V392q0 3-3 3H917q-3 0-3-3v-1q0-3 3-3H939" />
    </g>
    <path d="M819 543V537.500H908.500V497M715.500 446V502M713 446.500h5M713 502.500h5M967.500 341V360M966 341.500h3M966 360.500h3" stroke="#fff" />
    <g stroke="#ffe020">
      {bars.map(([x, y]) => <circle key={`${x}-${y}`} cx={x} cy={y} r="1.600" fill="#5a1414" />)}
    </g>
    <g stroke="#7cc060">
      {dims.map(d => {
        const upright = d.x1 === d.x2;
        const ends = [[d.x1, d.y1], [d.x2, d.y2]];
        return (
          <g key={`${d.tx}-${d.ty}`}>
            <path d={`M${d.x1} ${d.y1}L${d.x2} ${d.y2}`} />
            {ends.map(([x, y]) => (
              <path key={`${x}-${y}`} d={`${tick(x, y, upright)}${upright ? `M${x - 5} ${y}h11` : `M${x} ${y - 5}v11`}`} />
            ))}
          </g>
        );
      })}
    </g>
    <g fill="#fff" fontSize="7" fontWeight="600" textAnchor="middle" className="font-['Noto_Sans',sans-serif]">
      {dims.map(d => <text key={`${d.tx}-${d.ty}`} x={d.tx} y={d.ty}>{d.t}</text>)}
    </g>
    <g fill="#14a01c" fontSize="7" textAnchor="middle">
      <text x="867" y="537">la</text>
      <text transform="translate(967 351) rotate(-90)">80</text>
      <text transform="translate(714 474) rotate(-90)">15*d</text>
    </g>
  </svg>
);

/* ---------- section dialog ---------- */

const pressed = 'flex h-[23px] items-center border border-[#0078d7] bg-[#deeaf6]';

const SectionDialog = () => (
  <section className="absolute top-6 right-5 bottom-1 left-[171px] z-10 flex flex-col border border-[#2c2c2c] bg-[#b9d1ea]">
    <div className="flex min-h-0 grow flex-col border border-white border-r-[#4cc8ec] border-b-[#4cc8ec] px-1.5 pb-1.5">
      <h2 className="-mx-1.5 flex h-[29px] shrink-0 items-center bg-linear-to-b from-[#99b4d1] to-[#b9d1ea] pt-2 pl-1.5">截面编辑</h2>
      <div className="flex min-h-0 grow flex-col bg-[#f0f0f0]">
        <div role="tablist" className="flex h-5 shrink-0 items-end pl-0.5">
          <button role="tab" className="h-[18px] w-10 border border-b-0 border-[#d9d9d9]">截面</button>
          <button role="tab" aria-selected="true" className="relative -mb-px h-[21px] w-[46px] bg-white">配筋</button>
        </div>
        <div className="mr-0.5 flex min-h-0 grow flex-col border border-[#d9d9d9] bg-white pt-[3px] pr-px pb-0.5 pl-[3px]">
          <div className="flex min-h-0 grow flex-col bg-[#f0f0f0] pl-px">
            <div className={`${bar} h-7 shrink-0 self-start pr-1 pl-px`}>
              <button className={`${pressed} px-1`}>纵筋</button>
              <span className="mr-0.5 ml-[3px] h-5 w-px bg-[#bdbdbd]" />
              <button className={`${pressed} px-1`}>点</button>
              <span className="mx-0.5"><Caret /></span>
              <span className="ml-px flex h-[22px] w-[50px] items-center bg-white pr-1 pl-px">
                <select aria-label="钢筋信息" className="grow appearance-none outline-none"><option>1A8</option></select>
                <Caret />
              </span>
              <span className="mr-1.5 ml-1 h-5 w-px bg-[#bdbdbd]" />
              <Tool icon={<Svg><path d="M3 1v11l3-3 2 6 2-1-2-5h4z" fill="#fff" stroke="#888" /></Svg>} label="选择" />
              <button className="mx-2 flex items-center gap-1.5">手动设置参考线 <Caret /></button>
              <span className="mr-[5px] h-5 w-px bg-[#bdbdbd]" />
              <Tool icon={<Svg><path d="M4 1.500h11l-3 13H1zM0 7.500h14" stroke="#1a70b8" strokeWidth="1.300" /><path d="M5 7.500h6L8 11z" fill="#1a70b8" /></Svg>} label="设置标高" />
              <span className="w-1.5" />
              <Tool icon={<Svg><path d="M2.500 4v11M13.500 6v9M1 8.500h4M1 14.500h14M8 9v6" stroke="#1c4878" strokeWidth="1.300" /><path d="M4 3l3-3h6l2 5-5 4-5-1z" fill="#e0e6f0" stroke="#777" /><path d="M1 11h3v3H1z" fill="#e05010" /></Svg>} label="显示标注" />
              <span className="ml-[9px]"><Tool label="删除" off /></span>
            </div>
            <div className="flex h-[29px] shrink-0 items-center">
              <div className={`${bar} h-[26px] pr-1.5 pl-1.5`}>
                <button>横筋</button>
                <span className="mr-0.5 ml-2 h-4 w-px bg-[#bdbdbd]" />
                <span>钢筋类型:</span>
                <button className={`${pressed} ml-px px-1`}>水平</button>
                <button className="ml-1">垂直</button>
              </div>
            </div>
            <div className="relative min-h-0 grow overflow-hidden border-2 border-[#ff0000] bg-[#14171f]">
              <SectionDrawing />
              <input aria-label="X" defaultValue="673.101" className="absolute top-[3px] left-[608px] h-[19px] w-[60px] border border-[#555] bg-[#181450] text-[12px] text-[#ddd] outline-none" />
              <label className="absolute top-[3px] left-[673px] flex h-[19px] w-[60px] items-center border border-[#777] bg-white pl-px">
                <input aria-label="Y" defaultValue="472.248" className="h-[14px] w-[46px] bg-[#0078d7] text-[12px] text-white outline-none" />
              </label>
            </div>
            <div className="flex h-7 shrink-0 items-center">
              <button className={`${pressed} gap-1 px-[3px]`}>
                <Svg><path d="M1 2.500h14M4.500 0v16" stroke="#d89a9a" strokeWidth="3" /><path d="M8 7l5 6M8 7l1 6 2-2" stroke="#888" /></Svg>正交
              </button>
              <button className={`${pressed} gap-1 px-[3px]`}>
                <Svg><path d="M1 0v9M15 0v9M1 3.500h14" stroke="#c07070" /><path d="M1.500 7.500h13v7h-13z" fill="#eee" stroke="#555" /><path d="M6 9v5M8.500 9.500h3v2h-3v2.500h3" stroke="#000" /></Svg>动态输入
              </button>
              <div className={`${bar} ml-0.5 h-[26px] gap-[7px] px-1`}>
                <Tool icon={<Svg><path d="M0 11.500h16M13.500 1v14" stroke="#2c70b8" strokeWidth="1.300" /><path d="M12 10h3v3h-3z" fill="#0c3070" /></Svg>} label="垂点" />
                <Tool icon={<Svg><path d="M0 8h16" stroke="#5c90c8" strokeWidth="1.300" /><path d="M6 6h4v4H6z" fill="#0c2060" /></Svg>} label="中点" />
              </div>
            </div>
          </div>
        </div>
        <footer className="mt-[3px] flex h-[22px] shrink-0 gap-0.5">
          <span className={`${bar} w-[98px] border border-[#d9d9d9] pl-1`}>(X: 673 Y: 472)</span>
          <span className={`${bar} grow border border-[#d9d9d9] pl-px`}>
            左键或Shift+左键布置(可选择线筋端点或中心点);按右键中止或ESC键取消;
            <span className="mt-1 ml-auto"><Svg w={12} h={12}><path d="M8 1h2M4 5h2M8 5h2M0 9h2M4 9h2M8 9h2" stroke="#b4b4b4" strokeWidth="2" /></Svg></span>
          </span>
        </footer>
      </div>
    </div>
  </section>
);

const PropertyPanel = () => (
  <section className="relative mr-0.5 ml-[5px] flex min-w-0 grow flex-col pt-px pb-0.5">
    <div role="tablist" className="flex h-[21px] shrink-0 bg-white">
      <button role="tab" aria-selected="true" className="relative -mb-px w-[63px] border border-b-0 border-[#d9d9d9] bg-white">属性编辑</button>
      <span className="grow border-b border-[#d9d9d9]" />
    </div>
    <div className="flex grow border border-t-0 border-[#d9d9d9] bg-white pt-[3px] pr-0.5 pb-0.5 pl-0.5">
      <div className="flex grow justify-between border border-[#a0a0a0]">
        <PropertyTable />
        <div className="flex w-4 flex-col items-center bg-[#f0f0f0] py-1.5">
          <Arrow dir="up" />
          <span className="mt-1 h-[386px] w-[15px] bg-[#cdcdcd]" />
          <span className="mt-auto"><Arrow dir="down" /></span>
        </div>
      </div>
    </div>
    <SectionDialog />
  </section>
);

/* ---------- bottom ---------- */

const cell = `${bar} border border-[#d4d4d4] pl-0.5`;

const StatusBar = () => (
  <footer className="flex h-[21px] shrink-0 gap-0.5 bg-[#f8f8f8] pt-px">
    <span className={`${cell} w-[146px]`} />
    <span className={`${cell} w-[77px]`}><span><Mono text="层高:4.5m" /></span></span>
    <span className={`${cell} w-[97px]`}><span><Mono text="底标高:4.45m" /></span></span>
    <span className={`${cell} w-[51px]`}><Mono text="0" /></span>
    <span className={`${cell} grow`}>名称在当前层当前构件类型下不允许重名</span>
    <span className={`${cell} w-[71px]`}><Mono text="279.1 FPS" /></span>
  </footer>
);

const Taskbar = () => (
  <footer className="flex h-10 shrink-0 items-center bg-linear-to-r from-[#07171b] via-[#05191d] to-[#0a0c0d] text-white">
    <button aria-label="开始" className="flex h-full w-12 items-center justify-center bg-[#0a0a0a]">
      <Svg><path d="M0 2.500l7-1V7.500H0zM8 1.300L16 0v7.500H8zM0 8.500h7v6l-7-1zM8 8.500h8V16l-8-1.300z" fill="#fff" /></Svg>
    </button>
    <label className="flex h-full w-[344px] items-center bg-[#f2f2f2] pr-3 pl-2">
      <Svg w={22} h={22}><circle cx="11" cy="11" r="8.800" stroke="#111" strokeWidth="2.800" /></Svg>
      <input aria-label="搜索" placeholder="在这里输入你要搜索的内容" className="ml-2.5 min-w-0 grow text-[14px] outline-none placeholder:text-[#444]" />
      <Svg h={18}><rect x="5" y="1" width="6" height="10" rx="3" stroke="#333" /><path d="M2.500 8v1c0 6 11 6 11 0V8M8 14v3M5 17h6" stroke="#333" /></Svg>
    </label>
    <button aria-label="任务视图" className="ml-4"><Svg w={18} h={16}><path d="M1.500 4.500h10v7h-10zM1.500 0v2h10V0M1.500 16v-2h10v2M15.500 0v5M15.500 10v6" stroke="#fff" strokeWidth="1.200" /><path d="M14 6h3v3h-3z" fill="#fff" /></Svg></button>
    <button aria-label="应用" className="ml-[30px]">
      <Svg w={22} h={22}><path d="M11 10C4 12 0 8 1 4s8-5 9 0l1 6zM12 11c-2-7 2-11 6-10s5 8 0 9zM11 12c7-2 11 2 10 6s-8 5-9 0zM10 11c2 7-2 11-6 10s-5-8 0-9z" fill="#eee" stroke="#222" strokeWidth=".6" /></Svg>
    </button>
    <div className="ml-3.5 flex h-[30px] w-[150px] items-center justify-between border border-[#777] bg-[#4a4b4b] px-1">
      <Svg w={19} h={19}><path d="M15.500 14.500c-2 4-11 3.500-11-4s10-8.500 11.500-1v1H5" stroke="#3aa0f4" strokeWidth="3" /><path d="M2 17C-1 14 6 4 14 2c4-1 4 1 3 3" stroke="#7cc8ff" strokeWidth="1.500" /></Svg>
      <Svg w={20} h={20}><circle cx="9" cy="8" r="6.500" stroke="#bbb" /><path d="M14 13l5 5" stroke="#bbb" strokeWidth="1.300" /></Svg>
    </div>
    <button aria-label="助手" className="ml-3">
      <Svg w={28} h={28}><path d="M18 16c-2 6-12 5-12-2S17 6 17 13s-8 5-7 1 5-3 4 0M18 22C10 28 1 21 3 13S13 4 18 7" stroke="#ddd" strokeWidth="1.600" /><path d="M22 1c4 0 4 4 4 7l2 4H16l2-4c0-3 0-7 4-7zM20 13h4l-2 2z" fill="#f0b400" /></Svg>
    </button>
    <button aria-label="PDF" className="ml-[17px] flex h-full w-10 items-center justify-center border-y-3 border-t-transparent border-b-[#76b9ed]">
      <Svg w={24} h={24}><rect width="24" height="24" rx="3" fill="#d8680c" stroke="#b9a080" /><path d="M4 17V8h3v5H4M10 17V8c4 0 4 9 0 9M17 17V8h4M17 12h3M10 6h4M12 4v3" stroke="#ffe8c8" strokeWidth="1.600" /></Svg>
    </button>
    <button aria-label="GGJ2013" className="ml-[5px] flex h-full w-12 items-center justify-center border-y-3 border-t-[#3a484b] border-b-[#76b9ed] bg-[#3a484b]"><AppLogo size={24} /></button>
    <button aria-label="便笺" className="ml-[5px] flex h-full w-10 items-center justify-center border-y-3 border-t-transparent border-b-[#76b9ed]">
      <Svg w={24} h={24}><rect width="24" height="24" rx="3" fill="#f4a010" stroke="#ffc850" /><path d="M4 7l10-3 5 13-12 4z" fill="#fff6dc" stroke="#a86a10" /><path d="M7 10l7-2M8 13l7-2M9 16l5-2" stroke="#b08040" /><path d="M21 2l-7 11-1 3 3-2 6-11z" fill="#a8340c" /></Svg>
    </button>
    <div className="mr-5 ml-auto flex h-full w-[17px] flex-col items-center justify-between bg-[#f0f0f0] py-1"><Arrow dir="up" /><Arrow dir="down" /></div>
    <Svg w={18} h={18}><circle cx="12" cy="5" r="3" stroke="#fff" /><circle cx="5" cy="9" r="2.500" stroke="#fff" /><path d="M1 16c0-5 8-5 8 0M9 11c3-4 7-2 7 2" stroke="#fff" /></Svg>
    <span className="ml-5"><Svg w={14} h={10}><path d="M1 8l6-6 6 6" stroke="#fff" strokeWidth="1.300" /></Svg></span>
    <span className="ml-2.5"><Svg w={18}><path d="M5 4.500h11v8H7M16 6.500h1.500v4H16M1 2.500v4h4v-4M2 2V0M4 2V0M3 6.500V11h4" stroke="#fff" /></Svg></span>
    <span className="ml-2"><Svg><path d="M2 14C2 8 7 3 14 3M5 14c0-5 4-8 9-8M8 14c0-3 2-5 6-5" stroke="#bbb" strokeWidth="1.400" /><circle cx="12" cy="13" r="1.500" fill="#fff" /></Svg></span>
    <span className="ml-1.5"><Svg w={18}><path d="M1 5.500h3l4-4v13l-4-4H1z" stroke="#fff" /><path d="M10.500 6c1 1 1 3 0 4M13 4c2 2 2 6 0 8" stroke="#fff" /><path d="M15.500 2c2.500 3 2.500 9 0 12" stroke="#888" /></Svg></span>
    <span className="ml-1.5"><Svg w={24} h={14}><path d="M.5 .5h22v13H.5z" stroke="#fff" /><path d="M3 4h18M3 7h18" stroke="#fff" strokeWidth="1.500" strokeDasharray="1.500 1.500" /><path d="M6 10.500h12" stroke="#fff" /></Svg></span>
    <span className="ml-1.5"><Svg h={16}><path d="M2 15L8 2l6 13M4.500 10.500h7" stroke="#fff" strokeWidth="2" /></Svg></span>
    <span className="ml-3"><SogouLogo size={17} /></span>
    <time className="ml-4 w-[62px] text-center leading-[19px]">13:34<br />2018/11/1</time>
    <span className="relative mr-[25px] ml-[17px] flex">
      <Svg w={16} h={18}><path d="M0 1h16v12H8l-4 4v-4H0z" fill="#fff" /><path d="M3 4.500h10M3 7h10M3 9.500h8" stroke="#111" /></Svg>
      <span className="absolute -right-2 -bottom-2 flex size-4 items-center justify-center rounded-full border border-[#999] bg-[#333] text-[12px] font-bold">2</span>
    </span>
  </footer>
);

export default function App() {
  return (
    <div className="flex h-screen min-h-[700px] flex-col overflow-hidden bg-[#f0f0f0] font-['Noto_Sans','Noto_Sans_CJK_SC',sans-serif] text-[12px] leading-4 text-black">
      <TitleBar />
      <MenuBar />
      <MainToolbar />
      <main className="flex min-h-0 grow">
        <NavPanel />
        <div className="ml-1.5 flex min-w-0 grow flex-col">
          <ComponentToolbar />
          <div className="flex min-h-0 grow">
            <ComponentList />
            <PropertyPanel />
          </div>
        </div>
      </main>
      <StatusBar />
      <Taskbar />
    </div>
  );
}
